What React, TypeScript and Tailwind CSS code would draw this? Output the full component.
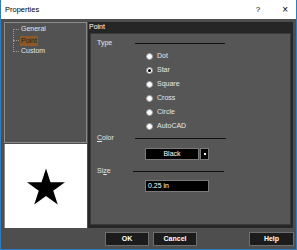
import React from "react";

const font = { fontFamily: '"Liberation Sans", Arial, sans-serif' };

function Radio({ label, checked }: { label: string; checked?: boolean }) {
  return (
    <div className="flex h-[14px] items-center pl-[55px]">
      <div className="flex h-[7px] w-[7px] items-center justify-center rounded-full border border-[#9a9a9a] bg-white">
        {checked && <div className="h-[3px] w-[3px] rounded-full bg-black" />}
      </div>
      <span className="ml-[4px] text-[7px] text-[#e6e6e6]">{label}</span>
    </div>
  );
}

function SectionLabel({ children, lineStart, lineEnd }: { children: React.ReactNode; lineStart: number; lineEnd: number }) {
  return (
    <div className="flex h-[10px] items-center pl-[6px]">
      <span className="w-[38px] shrink-0 text-[7px] text-[#e6e6e6]">{children}</span>
      <div
        className="h-[1px] shrink-0 bg-[#111]"
        style={{ marginLeft: lineStart - 136, width: lineEnd - lineStart }}
      />
    </div>
  );
}

export default function App() {
  return (
    <div
      className="flex h-[250px] w-[297px] flex-col border-x border-b border-[#2d7dc0] bg-[#4e4e4e]"
      style={font}
    >
      {/* title bar */}
      <div className="flex h-[19px] items-center bg-white text-black">
        <span className="ml-[4px] text-[7.5px]">Properties</span>
        <span className="ml-auto text-[8px]">?</span>
        <span className="ml-[22px] mr-[8px] text-[10px] leading-none">×</span>
      </div>

      <div className="flex flex-1 flex-col pl-[3px] pr-[2px] pt-[3px]">
        <div className="flex h-[206px] gap-[1px]">
          {/* left column */}
          <div className="flex w-[83px] flex-col">
            <div className="relative h-[121px] border border-[#8a8a8a] bg-[#525252] text-[7px]">
              {/* tree lines */}
              <div className="absolute left-[8px] top-[6px] h-[23px] w-0 border-l border-dotted border-[#9a9a9a]" />
              <div className="absolute left-[8px] top-[6px] w-[6px] border-t border-dotted border-[#9a9a9a]" />
              <div className="absolute left-[8px] top-[17px] w-[6px] border-t border-dotted border-[#9a9a9a]" />
              <div className="absolute left-[8px] top-[28px] w-[6px] border-t border-dotted border-[#9a9a9a]" />
              <div className="flex flex-col pl-[15px] pt-[1px]">
                <div className="flex h-[11px] items-center pl-[1px] text-[#e6e6e6]">General</div>
                <div className="flex h-[11px] items-center">
                  <span className="bg-[#8c5a28] px-[1px] leading-[10px] text-[#1a1a1a]">Point</span>
                </div>
                <div className="flex h-[11px] items-center pl-[1px] text-[#e6e6e6]">Custom</div>
              </div>
            </div>
            <div className="mt-[1px] flex flex-1 items-center justify-center border-l border-[#8a8a8a] bg-white">
              <svg width="38" height="37" viewBox="0 0 100 95">
                <polygon
                  points="50,0 61.8,36.3 100,36.3 69.1,58.8 80.9,95 50,72.6 19.1,95 30.9,58.8 0,36.3 38.2,36.3"
                  fill="#000"
                />
              </svg>
            </div>
          </div>

          {/* right panel */}
          <div className="flex w-[205px] flex-col bg-[#262626]">
            <div className="flex h-[11px] items-center pl-[1px] text-[7px] text-white">Point</div>
            <div className="mx-[2px] mb-[3px] flex flex-1 flex-col border border-[#3a3a3a] bg-[#565656] pt-[4px]">
              <SectionLabel lineStart={136} lineEnd={226}>Type</SectionLabel>
              <div className="mt-[1px]">
                <Radio label="Dot" />
                <Radio label="Star" checked />
                <Radio label="Square" />
                <Radio label="Cross" />
                <Radio label="Circle" />
                <Radio label="AutoCAD" />
              </div>
              <SectionLabel lineStart={136} lineEnd={227}>
                <span className="underline">C</span>olor
              </SectionLabel>
              <div className="mt-[5px] flex h-[12px] pl-[54px]">
                <div className="flex w-[54px] items-center justify-center border border-[#7a7a7a] bg-black text-[7px] text-white">
                  Black
                </div>
                <div className="ml-[1px] flex w-[9px] items-center justify-center border border-[#7a7a7a] bg-black">
                  <div className="h-[2px] w-[2px] bg-white" />
                </div>
              </div>
              <div className="mt-[6px]">
                <SectionLabel lineStart={134} lineEnd={225}>
                  Si<span className="underline">z</span>e
                </SectionLabel>
              </div>
              <div className="mt-[4px] flex h-[12px] pl-[54px]">
                <div className="flex w-[64px] items-center border border-[#7a7a7a] bg-black pl-[2px] text-[7px] text-white">
                  0.25 in
                </div>
              </div>
            </div>
          </div>
        </div>

        {/* buttons */}
        <div className="mt-[4px] flex h-[14px] text-[7px] font-bold text-white">
          <div className="ml-[101px] flex w-[44px] items-center justify-center border border-[#6e6e6e] bg-[#1c1c1c]">OK</div>
          <div className="ml-[4px] flex w-[44px] items-center justify-center border border-[#6e6e6e] bg-[#1c1c1c]">Cancel</div>
          <div className="ml-auto flex w-[45px] items-center justify-center border border-[#6e6e6e] bg-[#1c1c1c]">Help</div>
        </div>
      </div>
    </div>
  );
}
